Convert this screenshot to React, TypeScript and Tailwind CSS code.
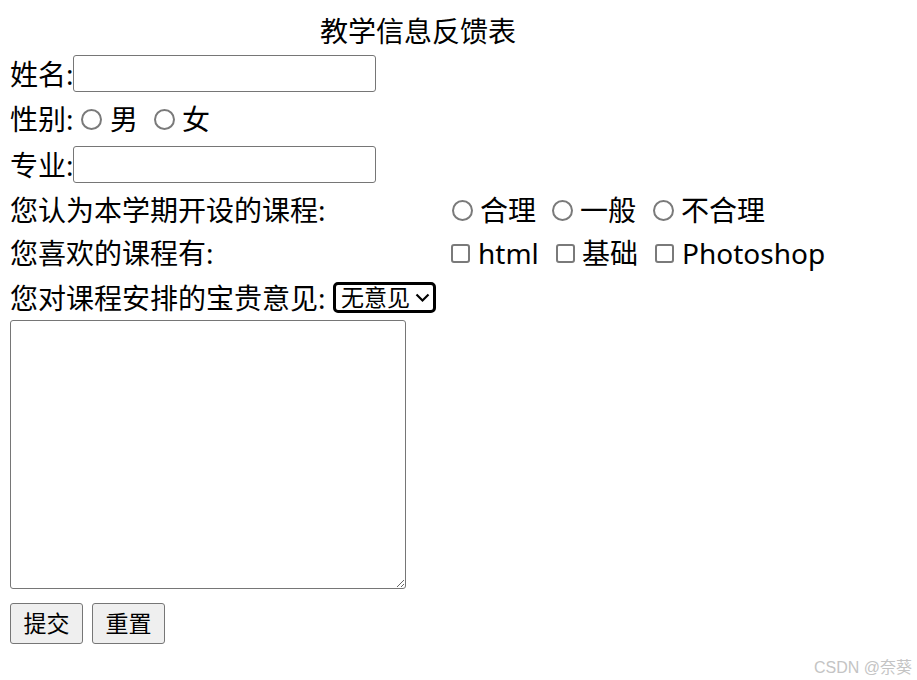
function Radio({ name }: { name: string }) {
  return (
    <input
      type="radio"
      name={name}
      className="m-0 h-[21px] w-[21px] shrink-0 appearance-none rounded-full border-2 border-[#7a7a7a] bg-white"
    />
  );
}

function Check() {
  return (
    <input
      type="checkbox"
      className="m-0 h-[19px] w-[19px] shrink-0 appearance-none rounded-[3px] border-2 border-[#7a7a7a] bg-white"
    />
  );
}

export default function App() {
  return (
    <div className="relative h-[680px] w-[917px] bg-white text-[28px] leading-none text-black whitespace-nowrap font-['Noto_Sans','Noto_Sans_CJK_SC',sans-serif]">
      <form className="pl-[10px] pt-[13px]">
        <div className="h-[36px] w-[816px] text-center leading-[36px]">教学信息反馈表</div>

        {/* 姓名 */}
        <div className="flex h-[49px] items-center">
          <span className="w-[63px] shrink-0">姓名:</span>
          <input
            type="text"
            className="h-[37px] w-[303px] rounded-[3px] border border-[#767676] bg-white px-1 text-[23px] outline-none"
          />
        </div>

        {/* 性别 */}
        <div className="flex h-[42px] items-center">
          <span className="w-[63px] shrink-0">性别:</span>
          <span className="ml-[8px] flex items-center">
            <Radio name="sex" />
          </span>
          <span className="ml-[8px] w-[28px] shrink-0">男</span>
          <span className="ml-[16px] flex items-center">
            <Radio name="sex" />
          </span>
          <span className="ml-[7px]">女</span>
        </div>

        {/* 专业 */}
        <div className="flex h-[49px] items-center">
          <span className="w-[63px] shrink-0">专业:</span>
          <input
            type="text"
            className="h-[37px] w-[303px] rounded-[3px] border border-[#767676] bg-white px-1 text-[23px] outline-none"
          />
        </div>

        {/* 课程 */}
        <div className="flex h-[42px] items-center">
          <span className="w-[442px] shrink-0">您认为本学期开设的课程:</span>
          <Radio name="course" />
          <span className="ml-[7px] w-[56px] shrink-0">合理</span>
          <span className="ml-[16px] flex items-center">
            <Radio name="course" />
          </span>
          <span className="ml-[7px] w-[56px] shrink-0">一般</span>
          <span className="ml-[17px] flex items-center">
            <Radio name="course" />
          </span>
          <span className="ml-[7px]">不合理</span>
        </div>

        {/* 喜欢 */}
        <div className="flex h-[44px] items-center">
          <span className="w-[441px] shrink-0">您喜欢的课程有:</span>
          <Check />
          <span className="ml-[8px] w-[60px] shrink-0">html</span>
          <span className="ml-[18px] flex items-center">
            <Check />
          </span>
          <span className="ml-[7px] w-[56px] shrink-0">基础</span>
          <span className="ml-[17px] flex items-center">
            <Check />
          </span>
          <span className="ml-[8px]">Photoshop</span>
        </div>

        {/* 意见 */}
        <div className="flex h-[45px] items-center">
          <span className="w-[323px] shrink-0">您对课程安排的宝贵意见:</span>
          <span className="relative inline-flex">
            <select className="h-[31px] w-[103px] appearance-none rounded-[5px] border-[3px] border-black bg-white pl-[5px] text-[23px] leading-none outline-none">
              <option>无意见</option>
              <option>有意见</option>
            </select>
            <svg
              className="pointer-events-none absolute right-[6px] top-[11px]"
              width="15"
              height="10"
              viewBox="0 0 15 10"
              fill="none"
            >
              <path d="M1.5 1.5 L7.5 7.5 L13.5 1.5" stroke="black" strokeWidth="2.2" />
            </svg>
          </span>
        </div>

        <textarea className="block h-[269px] w-[396px] rounded-[3px] border border-[#767676] bg-white outline-none" />

        <div className="mt-[14px] flex gap-[9px]">
          <button
            type="submit"
            className="h-[41px] w-[73px] rounded-[3px] border border-[#767676] bg-[#efefef] text-[23px]"
          >
            提交
          </button>
          <button
            type="reset"
            className="h-[41px] w-[73px] rounded-[3px] border border-[#767676] bg-[#efefef] text-[23px]"
          >
            重置
          </button>
        </div>
      </form>

      <div className="absolute bottom-[4px] right-[5px] text-[16px] text-[#c4c4c4] font-['Liberation_Sans','Noto_Sans_CJK_SC',sans-serif]">
        CSDN @奈葵
      </div>
    </div>
  );
}
